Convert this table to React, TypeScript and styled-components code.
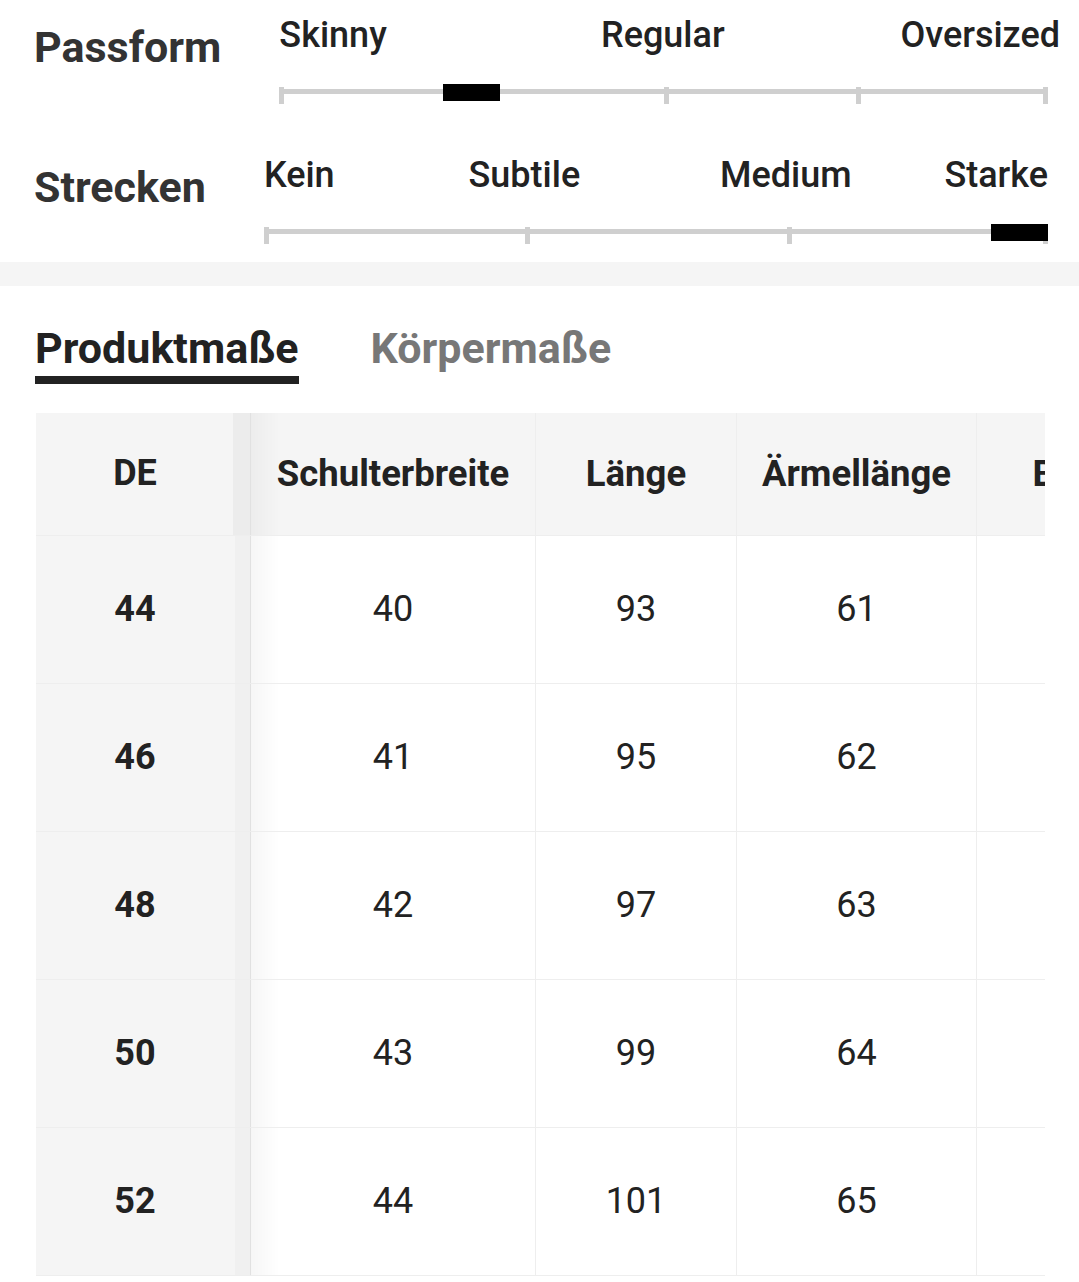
import React from 'react';
import styled, { createGlobalStyle } from 'styled-components';

const GlobalStyle = createGlobalStyle`
  *, *::before, *::after { box-sizing: border-box; }
  html, body { margin: 0; padding: 0; background: #ffffff; }
  body {
    font-family: Roboto, "Noto Sans", "Liberation Sans", sans-serif;
    color: #222222;
    -webkit-font-smoothing: antialiased;
  }
`;

const Page = styled.div`
  width: 1079px;
  overflow: hidden;
`;

/* ---------- fit scales ---------- */

const ScalesSection = styled.section`
  display: flex;
  flex-direction: column;
  gap: 56px;
  padding: 17px 31px 21px 34px;
`;

const ScaleRow = styled.div`
  display: flex;
  align-items: flex-start;
  gap: 58px;
`;

const ScaleTitle = styled.h3`
  margin: 9px 0 0;
  font-size: 43px;
  line-height: 1;
  font-weight: 700;
  color: #333333;
  white-space: nowrap;
`;

const Scale = styled.div`
  flex: 1;
  min-width: 0;
  display: flex;
  flex-direction: column;
  gap: 31px;
`;

const ScaleLabels = styled.div<{ $columns: string; $overhang: number }>`
  display: grid;
  grid-template-columns: ${(p) => p.$columns};
  margin-right: ${(p) => -p.$overhang}px;
`;

const ScaleLabel = styled.span<{ $align: 'start' | 'center' | 'end' }>`
  justify-self: ${(p) => p.$align};
  font-size: 36px;
  line-height: 1;
  font-weight: 500;
  color: #222222;
  white-space: nowrap;
`;

const Track = styled.div`
  position: relative;
  height: 17px;
  padding-top: 5px;
`;

const Rail = styled.div`
  height: 5px;
  background: #cfcfcf;
`;

const Tick = styled.span`
  position: absolute;
  top: 3px;
  width: 5px;
  height: 17px;
  background: #cfcfcf;
`;

const Knob = styled.span`
  position: absolute;
  top: 0;
  width: 57px;
  height: 17px;
  background: #000000;
`;

const Band = styled.div`
  height: 24px;
  background: #f5f5f5;
`;

/* ---------- tabs ---------- */

const TabBar = styled.div`
  display: flex;
  gap: 72px;
  padding: 41px 0 0 35px;
`;

const Tab = styled.button<{ $active?: boolean }>`
  appearance: none;
  background: none;
  border: 0;
  margin: 0;
  padding: 0 0 6px;
  font-family: inherit;
  font-size: 43px;
  line-height: 1;
  font-weight: 700;
  color: ${(p) => (p.$active ? '#222222' : '#777777')};
  border-bottom: 8px solid ${(p) => (p.$active ? '#222222' : 'transparent')};
  cursor: pointer;
  white-space: nowrap;
`;

/* ---------- size table ---------- */

const TableWrap = styled.div`
  margin: 29px 34px 0 36px;
  overflow: hidden;
`;

const SizeGrid = styled.div`
  display: grid;
  grid-template-columns: 215px 285px 201px 240px 200px;
  grid-template-rows: 123px repeat(5, 148px);
  width: max-content;
`;

const Cell = styled.div<{ $head?: boolean }>`
  display: flex;
  align-items: center;
  justify-content: center;
  font-size: ${(p) => (p.$head ? '36.5px' : '36px')};
  line-height: 1.2;
  white-space: nowrap;
  font-weight: ${(p) => (p.$head ? 700 : 400)};
  color: #222222;
  background: ${(p) => (p.$head ? '#f5f5f5' : '#ffffff')};
  border-right: 1px solid #eeeeee;
  border-bottom: 1px solid #eeeeee;
`;

const SizeCell = styled.div<{ $head?: boolean }>`
  position: sticky;
  left: 0;
  z-index: 1;
  display: flex;
  align-items: center;
  justify-content: center;
  padding-right: 16px;
  font-size: 36px;
  line-height: 1.2;
  font-weight: 700;
  color: #222222;
  background: ${(p) =>
    p.$head
      ? 'linear-gradient(90deg, #f5f5f5 197px, #ececec 197px)'
      : 'linear-gradient(90deg, #f5f5f5 199px, #f0f0f0 199px)'};
  border-right: 1px solid #e9e9e9;
  border-bottom: 1px solid #eeeeee;

  &::after {
    content: '';
    position: absolute;
    top: 0;
    bottom: 0;
    left: 100%;
    width: 30px;
    pointer-events: none;
    background: linear-gradient(90deg, rgba(0, 0, 0, 0.035), rgba(0, 0, 0, 0));
  }
`;

type Align = 'start' | 'center' | 'end';

interface ScaleDef {
  title: string;
  columns: string;
  overhang: number;
  labels: { text: string; align: Align }[];
  ticks: number[];
  value: number;
}

const scales: ScaleDef[] = [
  {
    title: 'Passform',
    columns: '190px 387px 1fr',
    overhang: 12,
    labels: [
      { text: 'Skinny', align: 'start' },
      { text: 'Regular', align: 'center' },
      { text: 'Oversized', align: 'end' },
    ],
    ticks: [0, 0.5, 0.75, 1],
    value: 0.25,
  },
  {
    title: 'Strecken',
    columns: '136px 249px 274px 1fr',
    overhang: 0,
    labels: [
      { text: 'Kein', align: 'start' },
      { text: 'Subtile', align: 'center' },
      { text: 'Medium', align: 'center' },
      { text: 'Starke', align: 'end' },
    ],
    ticks: [0, 1 / 3, 2 / 3, 1],
    value: 1,
  },
];

const headers = ['Schulterbreite', 'Länge', 'Ärmellänge', 'Brust'];

const rows = [
  { size: '44', values: ['40', '93', '61', '106'] },
  { size: '46', values: ['41', '95', '62', '110'] },
  { size: '48', values: ['42', '97', '63', '114'] },
  { size: '50', values: ['43', '99', '64', '118'] },
  { size: '52', values: ['44', '101', '65', '122'] },
];

export default function App() {
  return (
    <Page>
      <GlobalStyle />
      <ScalesSection>
        {scales.map((s) => (
          <ScaleRow key={s.title}>
            <ScaleTitle>{s.title}</ScaleTitle>
            <Scale>
              <ScaleLabels $columns={s.columns} $overhang={s.overhang}>
                {s.labels.map((l) => (
                  <ScaleLabel key={l.text} $align={l.align}>
                    {l.text}
                  </ScaleLabel>
                ))}
              </ScaleLabels>
              <Track>
                <Rail />
                {s.ticks.map((t) => (
                  <Tick key={t} style={{ left: `min(${t * 100}%, calc(100% - 5px))` }} />
                ))}
                <Knob
                  style={{
                    left: `clamp(0px, calc(${s.value * 100}% - 28.5px), calc(100% - 57px))`,
                  }}
                />
              </Track>
            </Scale>
          </ScaleRow>
        ))}
      </ScalesSection>
      <Band />
      <TabBar>
        <Tab $active>Produktmaße</Tab>
        <Tab>Körpermaße</Tab>
      </TabBar>
      <TableWrap>
        <SizeGrid>
          <SizeCell $head>DE</SizeCell>
          {headers.map((h) => (
            <Cell key={h} $head>
              {h}
            </Cell>
          ))}
          {rows.map((r) => (
            <React.Fragment key={r.size}>
              <SizeCell>{r.size}</SizeCell>
              {r.values.map((v, i) => (
                <Cell key={i}>{v}</Cell>
              ))}
            </React.Fragment>
          ))}
        </SizeGrid>
      </TableWrap>
    </Page>
  );
}
